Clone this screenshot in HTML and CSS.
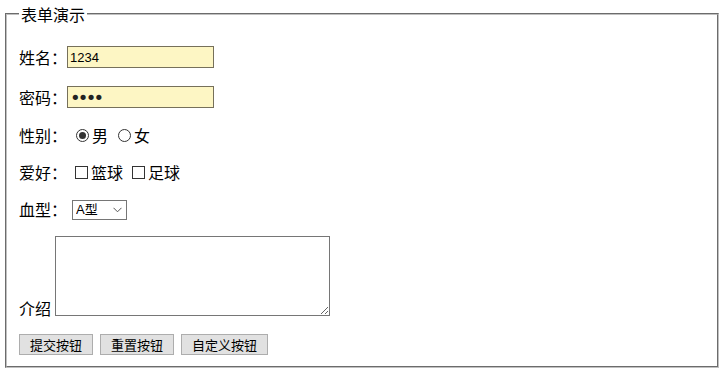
FILE: index.html
```html
<!DOCTYPE html>
<html lang="zh-CN">
<head>
<meta charset="utf-8">
<title>表单演示</title>
<link rel="stylesheet" href="styles.css">
</head>
<body>
<form class="page">
  <fieldset class="demo">
    <legend class="demo-title">表单演示</legend>
    <div class="row row-input">
      <span class="label">姓名：</span>
      <input class="field" type="text" value="1234">
    </div>
    <div class="row row-input">
      <span class="label">密码：</span>
      <input class="field field-pass" type="password" value="1234">
    </div>
    <div class="row row-text">
      <span class="label">性别：</span>
      <span class="options">
        <label class="opt"><input class="radio" type="radio" name="sex" checked>男</label>
        <label class="opt"><input class="radio" type="radio" name="sex">女</label>
      </span>
    </div>
    <div class="row row-text">
      <span class="label">爱好：</span>
      <span class="options">
        <label class="opt"><input class="check" type="checkbox">篮球</label>
        <label class="opt"><input class="check" type="checkbox">足球</label>
      </span>
    </div>
    <div class="row row-text">
      <span class="label">血型：</span>
      <span class="select-wrap">
        <select class="select">
          <option>A型</option>
          <option>B型</option>
          <option>O型</option>
          <option>AB型</option>
        </select>
        <svg class="chevron" width="9" height="6" viewBox="0 0 9 6"><path d="M0.5 0.8 L4.5 4.8 L8.5 0.8" fill="none" stroke="#555" stroke-width="1"/></svg>
      </span>
    </div>
    <div class="row row-area">
      <span class="label-area">介绍</span>
      <textarea class="area"></textarea>
    </div>
    <div class="row row-buttons">
      <button class="btn" type="submit">提交按钮</button>
      <button class="btn" type="reset">重置按钮</button>
      <button class="btn" type="button">自定义按钮</button>
    </div>
  </fieldset>
</form>
</body>
</html>
```

FILE: styles.css
```css
html, body {
  margin: 0;
  padding: 0;
  background: #fff;
}

body {
  font-family: "Noto Sans CJK SC", "Noto Sans", sans-serif;
  font-size: 16px;
  color: #000;
}

.page {
  margin: 0;
}

.demo {
  margin: 4px 7px 0 5px;
  padding: 21px 12px 11px 12px;
  border: 2px groove #c0c0c0;
  min-width: 0;
  display: flex;
  flex-direction: column;
  gap: 16px;
}

.demo-title {
  padding: 0 2px;
  font-size: 16px;
  line-height: 20px;
}

.row {
  display: flex;
  align-items: center;
}

.row-input {
  height: 24px;
}

.row-text {
  height: 21px;
}

.label {
  line-height: 21px;
  white-space: nowrap;
}

.field {
  box-sizing: border-box;
  width: 147px;
  height: 22px;
  margin: 0;
  padding: 0 2px;
  border: 1px solid #76705a;
  background: #fdf6c4;
  font-family: "Liberation Sans", Arial, sans-serif;
  font-size: 13px;
  color: #000;
  outline: none;
}

.field-pass {
  font-family: "DejaVu Sans", sans-serif;
  font-size: 18px;
  letter-spacing: -2.8px;
  color: #222;
}

.options {
  display: flex;
  align-items: center;
  gap: 10px;
  margin-left: 9px;
}

.opt {
  display: flex;
  align-items: center;
  line-height: 21px;
}

.radio {
  appearance: none;
  -webkit-appearance: none;
  box-sizing: border-box;
  width: 13px;
  height: 13px;
  margin: 0 3px 0 0;
  border: 1px solid #333;
  border-radius: 50%;
  background: #fff;
  display: inline-grid;
  place-content: center;
}

.radio:checked::before {
  content: "";
  width: 7px;
  height: 7px;
  border-radius: 50%;
  background: #333;
}

.check {
  appearance: none;
  -webkit-appearance: none;
  box-sizing: border-box;
  width: 13px;
  height: 13px;
  margin: 0 3px 0 -1px;
  border: 1px solid #333;
  border-radius: 0;
  background: #fff;
}

.select-wrap {
  position: relative;
  display: flex;
  align-items: center;
  margin-left: 5px;
  height: 20px;
}

.select {
  appearance: none;
  -webkit-appearance: none;
  box-sizing: border-box;
  width: 55px;
  height: 20px;
  margin: 0;
  padding: 0 0 0 3px;
  border: 1px solid #767676;
  border-radius: 0;
  background: #fff;
  font-family: "Liberation Sans", "Noto Sans CJK SC", sans-serif;
  font-size: 13px;
  color: #000;
}

.chevron {
  position: absolute;
  right: 5px;
  top: 7px;
  pointer-events: none;
}

.row-area {
  align-items: flex-end;
}

.label-area {
  line-height: 20px;
  margin-right: 4px;
  position: relative;
  top: 2px;
}

.area {
  box-sizing: border-box;
  width: 275px;
  height: 80px;
  margin: 0;
  padding: 2px;
  border: 1px solid #767676;
  border-radius: 0;
  background: #fff;
  font-size: 13px;
}

.row-buttons {
  gap: 7px;
  margin-top: 2px;
}

.btn {
  box-sizing: border-box;
  height: 21px;
  margin: 0;
  padding: 0 10px;
  border: 1px solid #adadad;
  border-radius: 0;
  background: #e1e1e1;
  font-family: "Noto Sans CJK SC", sans-serif;
  font-size: 13px;
  line-height: 19px;
  color: #000;
}
```
